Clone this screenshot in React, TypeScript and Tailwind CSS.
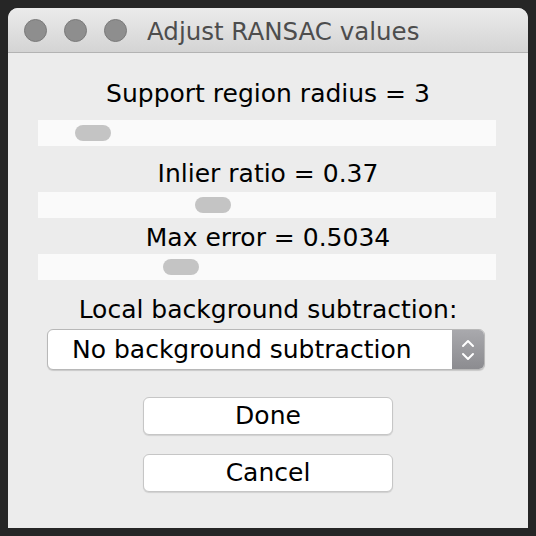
const font = { fontFamily: '"DejaVu Sans", "Liberation Sans", sans-serif' };

function Slider({ offset, className }: { offset: string; className: string }) {
  return (
    <div className={`ml-[30px] mr-[32px] flex h-[26px] items-center bg-[#fafafa] ${className}`}>
      <div className={`${offset} h-4 w-9 rounded-full bg-[#c4c4c4]`} />
    </div>
  );
}

function Label({ text, className }: { text: string; className: string }) {
  return (
    <div className={`text-center text-[25px] leading-[28px] text-black ${className}`}>
      {text}
    </div>
  );
}

export default function App() {
  return (
    <div className="h-[536px] w-[536px] bg-[#262626] p-2" style={font}>
      <div className="flex h-[520px] w-[520px] flex-col overflow-hidden rounded-t-[10px] bg-[#ececec]">
        <div className="flex h-[45px] shrink-0 items-center border-b border-[#b3b3b3] bg-gradient-to-b from-[#ebebeb] to-[#d4d4d4] pl-4">
          <div className="flex gap-[17px]">
            <span className="h-[23px] w-[23px] rounded-full border border-[#7a7a7a] bg-[#8e8e8e]" />
            <span className="h-[23px] w-[23px] rounded-full border border-[#7a7a7a] bg-[#8e8e8e]" />
            <span className="h-[23px] w-[23px] rounded-full border border-[#7a7a7a] bg-[#8e8e8e]" />
          </div>
          <span className="ml-[20px] pt-[4px] text-[24.5px] leading-none text-[#4d4d4d]">Adjust RANSAC values</span>
        </div>

        <Label text="Support region radius = 3" className="mt-[27px]" />
        <Slider offset="ml-[37px]" className="mt-[12px]" />
        <Label text="Inlier ratio = 0.37" className="mt-[14px]" />
        <Slider offset="ml-[157px]" className="mt-[4px]" />
        <Label text="Max error = 0.5034" className="mt-[6px]" />
        <Slider offset="ml-[125px]" className="mt-[2px]" />

        <Label text="Local background subtraction:" className="mt-[16px]" />
        <div className="ml-[39px] mt-[5px] flex h-[41px] w-[438px] overflow-hidden rounded-[6px] border border-[#b8b8b8] bg-white shadow-[0_1px_1px_rgba(0,0,0,0.15)]">
          <div className="flex flex-1 items-center pl-[24px] text-[25px] text-black">
            No background subtraction
          </div>
          <div className="flex w-[32px] items-center justify-center bg-gradient-to-b from-[#a9a9ad] to-[#8c8c90]">
            <svg width="14" height="24" viewBox="0 0 14 24" fill="none" stroke="white" strokeWidth="2" strokeLinecap="round" strokeLinejoin="round">
              <path d="M2 8 L7 3 L12 8" />
              <path d="M2 16 L7 21 L12 16" />
            </svg>
          </div>
        </div>

        <button className="mx-auto mt-[27px] flex h-[38px] w-[250px] items-center justify-center rounded-[6px] border border-[#c6c6c6] bg-white text-[25px] text-black shadow-[0_1px_1px_rgba(0,0,0,0.12)]">
          Done
        </button>
        <button className="mx-auto mt-[19px] flex h-[38px] w-[250px] items-center justify-center rounded-[6px] border border-[#c6c6c6] bg-white text-[25px] text-black shadow-[0_1px_1px_rgba(0,0,0,0.12)]">
          Cancel
        </button>
      </div>
    </div>
  );
}
